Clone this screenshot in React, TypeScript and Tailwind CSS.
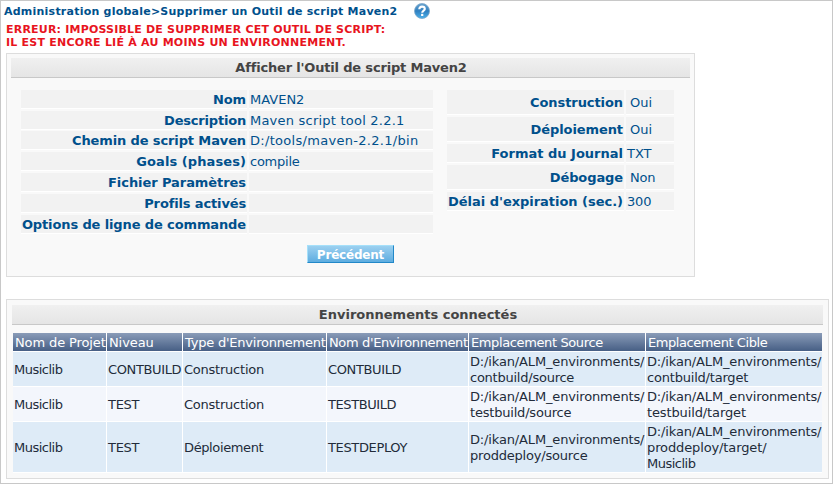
import type { ReactNode } from "react";

type Field = { label: string; value: string; labelClass?: string; valueClass?: string; rowClass: string };

const leftFields: Field[] = [
  { label: "Nom", value: "MAVEN2", labelClass: "tracking-[-0.1px]", rowClass: "h-[21px]" },
  { label: "Description", value: "Maven script tool 2.2.1", labelClass: "tracking-[-0.2px]", valueClass: "tracking-[0.22px]", rowClass: "h-[20px]" },
  { label: "Chemin de script Maven", value: "D:/tools/maven-2.2.1/bin", labelClass: "tracking-[-0.12px]", valueClass: "tracking-[0.3px]", rowClass: "h-[21px]" },
  { label: "Goals (phases)", value: "compile", labelClass: "tracking-[0.08px]", valueClass: "tracking-[-0.25px]", rowClass: "h-[21px]" },
  { label: "Fichier Paramètres", value: "", labelClass: "tracking-[-0.07px]", rowClass: "h-[21px]" },
  { label: "Profils activés", value: "", labelClass: "tracking-[-0.14px]", rowClass: "h-[21px]" },
  { label: "Options de ligne de commande", value: "", labelClass: "tracking-[-0.12px]", rowClass: "h-[21px]" },
];

const rightFields: Field[] = [
  { label: "Construction", value: "Oui", labelClass: "tracking-[-0.08px]", valueClass: "pl-[3px]", rowClass: "h-[27px]" },
  { label: "Déploiement", value: "Oui", labelClass: "tracking-[-0.09px]", valueClass: "pl-[3px]", rowClass: "h-[27px]" },
  { label: "Format du Journal", value: "TXT", rowClass: "h-[21px]" },
  { label: "Débogage", value: "Non", labelClass: "tracking-[-0.1px]", valueClass: "pl-[3px] tracking-[-0.2px]", rowClass: "h-[27px]" },
  { label: "Délai d'expiration (sec.)", value: "300", labelClass: "tracking-[-0.03px]", valueClass: "tracking-[-0.2px]", rowClass: "h-[21px]" },
];

function FieldTable({ fields, columns }: { fields: Field[]; columns: string }) {
  return (
    <div className="text-[13px] leading-[16px] text-[#00508c]">
      {fields.map((f) => (
        <div key={f.label} className={`grid gap-x-[2px] pb-[2px] ${columns} ${f.rowClass}`}>
          <div className="flex items-center justify-end border-b border-white bg-[#f2f2f2] pr-px pt-[2px] font-bold">
            <span className={f.labelClass}>{f.label}</span>
          </div>
          <div className="flex items-center border-b border-white bg-[#f2f2f2] pl-px pt-[2px]">
            <span className={f.valueClass}>{f.value}</span>
          </div>
        </div>
      ))}
    </div>
  );
}

function PanelTitle({ children, className }: { children: ReactNode; className: string }) {
  return (
    <h2 className={`h-[20px] border-b border-[#c8c8c8] bg-linear-to-b from-[#f0f0f0] to-[#e5e5e5] pl-px text-center text-[13px] font-bold leading-[19px] text-[#444] ${className}`}>
      {children}
    </h2>
  );
}

const headers = [
  { text: "Nom de Projet", track: "tracking-[-0.12px]" },
  { text: "Niveau", track: "tracking-[-0.1px]" },
  { text: "Type d'Environnement", track: "tracking-[-0.22px]" },
  { text: "Nom d'Environnement", track: "tracking-[-0.36px]" },
  { text: "Emplacement Source", track: "tracking-[-0.38px]" },
  { text: "Emplacement Cible", track: "tracking-[-0.43px]" },
];

type Line = [string, string];
const path: Line = ["D:/ikan/ALM_environments/", "tracking-[-0.15px]"];
const musiclib: Line = ["Musiclib", "tracking-[-0.5px]"];
const construction: Line = ["Construction", "tracking-[-0.23px]"];
const test: Line = ["TEST", "tracking-[-0.3px]"];

const rows: { className: string; cells: Line[][] }[] = [
  {
    className: "h-[34px] *:bg-[#deebf7]",
    cells: [
      [musiclib],
      [["CONTBUILD", "tracking-[-0.36px]"]],
      [construction],
      [["CONTBUILD", "tracking-[-0.36px]"]],
      [path, ["contbuild/source", "tracking-[-0.24px]"]],
      [path, ["contbuild/target", "tracking-[-0.2px]"]],
    ],
  },
  {
    className: "h-[34px] *:bg-[#f3f6fc]",
    cells: [
      [musiclib],
      [test],
      [construction],
      [["TESTBUILD", "tracking-[-0.42px]"]],
      [path, ["testbuild/source", "tracking-[-0.2px]"]],
      [path, ["testbuild/target", "tracking-[-0.12px]"]],
    ],
  },
  {
    className: "h-[50px] *:bg-[#deebf7]",
    cells: [
      [musiclib],
      [test],
      [["Déploiement", "tracking-[-0.38px]"]],
      [["TESTDEPLOY", "tracking-[-0.36px]"]],
      [path, ["proddeploy/source", "tracking-[-0.2px]"]],
      [path, ["proddeploy/target/", "tracking-[-0.12px]"], musiclib],
    ],
  },
];

const tableColumns = "grid grid-cols-[93px_75px_143px_141px_176px_176px] gap-x-px";

function HelpIcon() {
  return (
    <svg width="16" height="16" viewBox="0 0 16 16" aria-hidden="true">
      <defs>
        <linearGradient id="help" x1="0" y1="0" x2="0" y2="1">
          <stop offset="0" stopColor="#6aa3cf" />
          <stop offset="0.5" stopColor="#2f80c0" />
          <stop offset="1" stopColor="#4cb0ea" />
        </linearGradient>
      </defs>
      <circle cx="8" cy="8" r="7.5" fill="url(#help)" stroke="#7ba6c8" strokeWidth="0.8" />
      <path d="M5.3 6.2C5.3 4.4 6.4 3.6 8 3.6s2.8.8 2.8 2.3C10.8 7.6 8.2 7.6 8.2 9.7" fill="none" stroke="#fff" strokeWidth="2.1" />
      <rect x="7.1" y="10.8" width="2.2" height="2.2" fill="#fff" />
    </svg>
  );
}

export default function App() {
  return (
    <main className="h-[484px] w-[833px] overflow-hidden whitespace-nowrap border border-[#c8c8c8] bg-white pl-[5px] pt-px font-['DejaVu_Sans',sans-serif]">
      <header className="-ml-[2px] flex h-[20px] items-start pt-px text-[11px] font-bold text-[#00508c]">
        <h1 className="w-[410px] pt-px leading-[16px] tracking-[0.23px]">Administration globale&gt;Supprimer un Outil de script Maven2</h1>
        <HelpIcon />
      </header>
      <div className="pt-px text-[11px] font-bold leading-[13px] text-[#e8141e]">
        <p className="tracking-[0.2px]">ERREUR: IMPOSSIBLE DE SUPPRIMER CET OUTIL DE SCRIPT:</p>
        <p className="tracking-[0.23px]">IL EST ENCORE LIÉ À AU MOINS UN ENVIRONNEMENT.</p>
      </div>

      <section className="mt-[4px] h-[224px] w-[689px] border border-[#ddd] bg-[#f9f9f9] pl-[4px] pr-[4px] pt-[4px]">
        <PanelTitle className="tracking-[-0.18px]">Afficher l'Outil de script Maven2</PanelTitle>
        <div className="flex gap-[14px] pl-[10px] pt-[12px]">
          <FieldTable fields={leftFields} columns="grid-cols-[226px_184px]" />
          <FieldTable fields={rightFields} columns="grid-cols-[177px_48px]" />
        </div>
        <button className="ml-[296px] mt-[9px] flex h-[18px] w-[87px] items-center justify-center border border-b-[#2288c8] border-l-[#a5e0fa] border-r-[#2288c8] border-t-[#a5e0fa] bg-linear-to-b from-[#9bd0f0] to-[#5eade0] pt-[2px] text-[12px] font-bold leading-[14px] tracking-[-0.2px] text-white">
          Précédent
        </button>
      </section>

      <section className="mt-[22px] h-[180px] w-[823px] border border-[#ddd] bg-[#f9f9f9] px-[5px] pt-[5px]">
        <PanelTitle className="tracking-normal">Environnements connectés</PanelTitle>
        <div className="mt-[8px] ml-px flex w-[809px] flex-col gap-px bg-white pb-px text-[13px] leading-[16px] text-[#222b3a]">
          <div className={`${tableColumns} h-[18px] text-white`}>
            {headers.map((h) => (
              <div key={h.text} className={`bg-linear-to-b from-[#8a9cb8] to-[#475f85] pl-[2px] pt-px leading-[17px] ${h.track}`}>
                {h.text}
              </div>
            ))}
          </div>
          {rows.map((r, i) => (
            <div key={i} className={`${tableColumns} ${r.className}`}>
              {r.cells.map((lines, j) => (
                <div key={j} className="flex flex-col justify-center pl-px pt-[2px]">
                  {lines.map(([text, track], k) => (
                    <span key={k} className={track}>{text}</span>
                  ))}
                </div>
              ))}
            </div>
          ))}
        </div>
      </section>
    </main>
  );
}
